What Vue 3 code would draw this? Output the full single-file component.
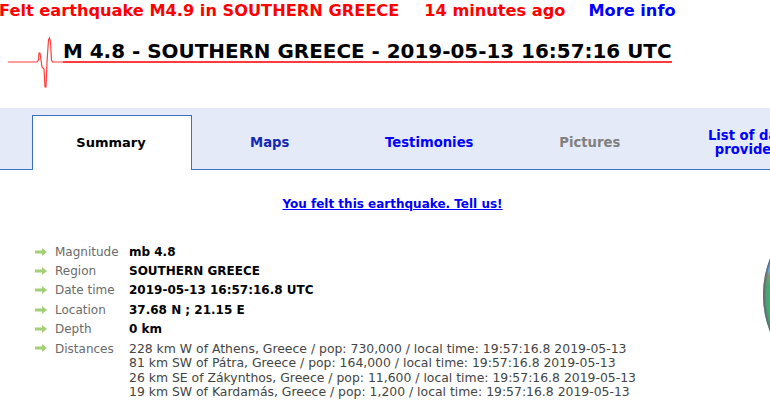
<script setup>
const facts = [
  { label: 'Magnitude', value: 'mb 4.8' },
  { label: 'Region', value: 'SOUTHERN GREECE' },
  { label: 'Date time', value: '2019-05-13 16:57:16.8 UTC' },
  { label: 'Location', value: '37.68 N ; 21.15 E' },
  { label: 'Depth', value: '0 km' }
]
const distances = [
  '228 km W of Athens, Greece / pop: 730,000 / local time: 19:57:16.8 2019-05-13',
  '81 km SW of Pátra, Greece / pop: 164,000 / local time: 19:57:16.8 2019-05-13',
  '26 km SE of Zákynthos, Greece / pop: 11,600 / local time: 19:57:16.8 2019-05-13',
  '19 km SW of Kardamás, Greece / pop: 1,200 / local time: 19:57:16.8 2019-05-13'
]
const tabs = [
  { label: 'Summary', kind: 'active' },
  { label: 'Maps', kind: 'dark' },
  { label: 'Testimonies', kind: 'link' },
  { label: 'Pictures', kind: 'off' },
  { label: 'List of data providers', kind: 'link wrap' }
]
</script>

<template>
  <div class="page">
    <div class="alert">
      <span>Felt earthquake M4.9 in SOUTHERN GREECE</span>
      <span>14 minutes ago</span>
      <a>More info</a>
    </div>
    <div class="head">
      <svg class="wave" width="64" height="70" viewBox="0 0 64 70">
        <polyline points="8,40 37,40 38.5,38 39,31 40,31 41,38 42,45 44,47 45,65 46,65 47,40 48.5,18 49.5,16 50.5,20 51.5,38 52.5,40 64,40" fill="none" stroke="#ff3b3b" stroke-width="1.2" />
      </svg>
      <h1>M 4.8 - SOUTHERN GREECE - 2019-05-13 16:57:16 UTC</h1>
    </div>
    <nav class="tabs">
      <div v-for="t in tabs" :key="t.label" class="tab" :class="t.kind">{{ t.label }}</div>
    </nav>
    <a class="tell">You felt this earthquake. Tell us!</a>
    <section class="details">
      <div v-for="f in facts" :key="f.label" class="row">
        <svg class="arrow" width="12" height="8" viewBox="0 0 12 8"><path d="M0 2.5h7V0l5 4-5 4V5.500H0z" fill="#a3cf78" /></svg>
        <span class="label">{{ f.label }}</span>
        <b class="value">{{ f.value }}</b>
      </div>
      <div class="row top">
        <svg class="arrow" width="12" height="8" viewBox="0 0 12 8"><path d="M0 2.5h7V0l5 4-5 4V5.500H0z" fill="#a3cf78" /></svg>
        <span class="label">Distances</span>
        <div class="dist">
          <div v-for="d in distances" :key="d">{{ d }}</div>
        </div>
      </div>
      <div class="globe"></div>
    </section>
  </div>
</template>

<style>
html, body { margin: 0; overflow: hidden; background: #fff; }
</style>

<style scoped>
.page {
  width: 770px;
  height: 410px;
  overflow: hidden;
  font-family: "DejaVu Sans", Verdana, sans-serif;
  position: relative;
}
.alert {
  display: flex;
  gap: 25px;
  margin-left: -1px;
  height: 22px;
  line-height: 22px;
  font-size: 16.2px;
  font-weight: bold;
  color: #f00;
  white-space: nowrap;
}
.alert a { color: #00f; margin-left: -2px; }
.head {
  height: 86px;
  position: relative;
  display: flex;
}
.wave { position: absolute; left: 0; top: 0; }
h1 {
  margin: 17px 0 0 63px;
  height: 22px;
  line-height: 26px;
  font-size: 19.93px;
  font-weight: bold;
  color: #000;
  white-space: nowrap;
  border-bottom: 2px solid #ff3b3b;
  align-self: flex-start;
}
.tabs {
  display: flex;
  height: 62px;
  padding-left: 32px;
  box-sizing: border-box;
  background: #e4eaf8;
  border-bottom: 1px solid #3a70c4;
  white-space: nowrap;
}
.tab {
  flex: 0 0 159.5px;
  box-sizing: border-box;
  margin-top: 7px;
  padding-top: 1px;
  display: flex;
  align-items: center;
  justify-content: center;
  text-align: center;
  font-size: 13.2px;
  font-weight: bold;
  line-height: 14px;
  color: #00f;
}
.tab.active {
  flex-basis: 160px;
  height: 55px;
  padding: 0 2px 1px 0;
  background: #fff;
  color: #000;
  font-size: 13px;
  border: 1px solid #3a70c4;
  border-bottom: 0;
}
.tab.dark { color: #1428b4; margin-left: -2px; }
.tab.off { color: #808080; margin-left: 1px; }
.tab.wrap { white-space: normal; padding: 1px 24px 0; margin-left: 1px; }
.tell {
  display: block;
  margin-top: 26px;
  padding-left: 15px;
  text-align: center;
  font-size: 12px;
  font-weight: bold;
  line-height: 16px;
  color: #00f;
  text-decoration: underline;
}
.details {
  margin: 30px 0 0 34px;
  position: relative;
}
.row {
  display: flex;
  align-items: center;
  height: 19.4px;
  font-size: 12px;
}
.row.top { align-items: flex-start; padding-top: 3px; box-sizing: border-box; }
.row.top .arrow { margin-top: 2px; }
.arrow { flex: none; margin: 0 8px 0 1px; }
.label { flex: 0 0 74px; color: #6a6a6a; }
.value { color: #000; }
.dist { font-size: 12.42px; line-height: 14.3px; color: #444; white-space: nowrap; }
.globe {
  position: absolute;
  left: 729px;
  top: -47px;
  width: 200px;
  height: 200px;
  border-radius: 50%;
  background: linear-gradient(180deg, #63c3ea 0, #63c3ea 76px, #8d9a78 80px, #4aa873 90px, #3cb371 100%);
  box-shadow: inset 2px 0 2px #667;
}
</style>
